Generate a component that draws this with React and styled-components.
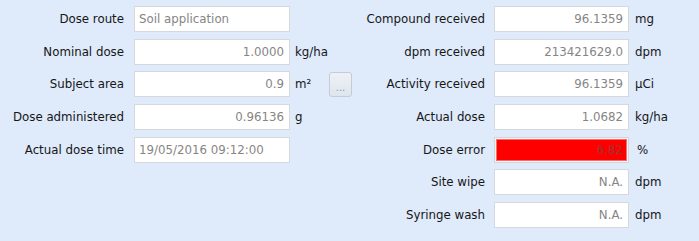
import React from "react";
import styled, { createGlobalStyle } from "styled-components";

const Global = createGlobalStyle`
  html, body { margin: 0; padding: 0; background: #dfeafb; }
  body { font-family: "DejaVu Sans", Verdana, sans-serif; font-size: 11.8px; color: #161616; }
`;

const Page = styled.div`
  display: flex;
  align-items: flex-start;
  padding-top: 6px;
  width: 699px;
  height: 235px;
  background: #dfeafb;
`;

const Panel = styled.div`
  display: grid;
  grid-template-columns: ${(p) => p.$cols};
  grid-auto-rows: 26px;
  row-gap: 6.67px;
  align-items: center;
`;

const Label = styled.div`
  text-align: right;
  white-space: nowrap;
  padding-right: ${(p) => p.$gap}px;
`;

const Field = styled.div`
  box-sizing: border-box;
  height: 26px;
  border: 1px solid #d5d8dc;
  background: #ffffff;
  color: #858585;
  display: flex;
  align-items: center;
  justify-content: ${(p) => (p.$left ? "flex-start" : "flex-end")};
  padding: 0 ${(p) => (p.$left ? 0 : 5)}px 0 ${(p) => (p.$left ? 4 : 0)}px;
  white-space: nowrap;
  overflow: hidden;
`;

const ErrorField = styled(Field)`
  padding: 1px;
  background: #f4f4f4;
  border-color: #dcd4d4;
`;

const ErrorFill = styled.div`
  flex: 1;
  height: 100%;
  background: #ff0000;
  box-shadow: inset 0 0 0 1px #f07070;
  color: #9e3434;
  display: flex;
  align-items: center;
  justify-content: flex-end;
  padding-right: 4px;
`;

const Unit = styled.div`
  padding-left: ${(p) => p.$gap}px;
  white-space: nowrap;
`;

const DotsButton = styled.button`
  box-sizing: border-box;
  width: 23px;
  height: 25px;
  border: 1px solid #c5ccd6;
  border-radius: 3px;
  background: linear-gradient(#eef2f7, #dfe5ee);
  color: #8f98a3;
  font-family: inherit;
  font-size: 10px;
  padding: 7px 0 0;
  line-height: 1;
`;

const Empty = styled.div``;

const leftRows = [
  { label: "Dose route", value: "Soil application", left: true },
  { label: "Nominal dose", value: "1.0000", unit: "kg/ha" },
  { label: "Subject area", value: "0.9", unit: "m²", button: true },
  { label: "Dose administered", value: "0.96136", unit: "g" },
  { label: "Actual dose time", value: "19/05/2016 09:12:00", left: true },
];

const rightRows = [
  { label: "Compound received", value: "96.1359", unit: "mg" },
  { label: "dpm received", value: "213421629.0", unit: "dpm" },
  { label: "Activity received", value: "96.1359", unit: "µCi" },
  { label: "Actual dose", value: "1.0682", unit: "kg/ha" },
  { label: "Dose error", value: "6.82", unit: "%", error: true },
  { label: "Site wipe", value: "N.A.", unit: "dpm" },
  { label: "Syringe wash", value: "N.A.", unit: "dpm" },
];

export default function App() {
  return (
    <>
      <Global />
      <Page>
        <Panel $cols="134px 156px 39px 23px">
          {leftRows.map((r) => (
            <React.Fragment key={r.label}>
              <Label $gap={10}>{r.label}</Label>
              <Field $left={r.left}>{r.value}</Field>
              <Unit $gap={5}>{r.unit}</Unit>
              {r.button ? <DotsButton>...</DotsButton> : <Empty />}
            </React.Fragment>
          ))}
        </Panel>
        <Panel $cols="142px 135px auto">
          {rightRows.map((r) => (
            <React.Fragment key={r.label}>
              <Label $gap={9}>{r.label}</Label>
              {r.error ? (
                <ErrorField>
                  <ErrorFill>{r.value}</ErrorFill>
                </ErrorField>
              ) : (
                <Field>{r.value}</Field>
              )}
              <Unit $gap={r.error ? 8 : 6}>{r.unit}</Unit>
            </React.Fragment>
          ))}
        </Panel>
      </Page>
    </>
  );
}
